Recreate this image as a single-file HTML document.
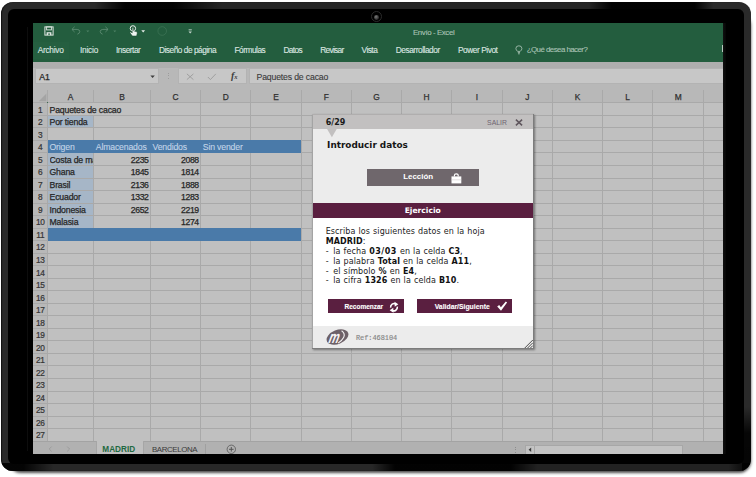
<!DOCTYPE html>
<html lang="es">
<head>
<meta charset="utf-8">
<title>Envío - Excel</title>
<style>
html,body{margin:0;padding:0;background:#fff;}
body{width:756px;height:477px;position:relative;overflow:hidden;font-family:"Liberation Sans",sans-serif;}
.abs{position:absolute;}
#shadow{position:absolute;left:8px;top:12px;width:741px;height:458px;border-radius:12px;box-shadow:1.5px 2.5px 3px rgba(0,0,0,.7);}
#frame{position:absolute;left:1px;top:2px;width:750px;height:469.4px;border-radius:12px;background:#2a2a2a;box-shadow:inset 1px 0 1px #111;overflow:hidden;}
#bezel{position:absolute;left:8px;top:9px;width:735.8px;height:455.2px;border-radius:6px;background:#000;}
#screen{position:absolute;left:33px;top:23px;width:690px;height:431px;background:#c0c0c0;overflow:hidden;}
#ribbon{position:absolute;left:0;top:0;width:690px;height:38.9px;background:#235d3e;}
.tab{position:absolute;white-space:nowrap;line-height:10px;-webkit-text-stroke:0.12px currentColor;}
#band{position:absolute;left:0;top:38.9px;width:690px;height:6.4px;background:#aeaeae;}
#fbar{position:absolute;left:0;top:45.3px;width:690px;height:21.7px;background:#b8b8b8;}
.box{position:absolute;top:0;height:16px;background:#c7c7c7;border:1px solid #b3b3b3;box-sizing:border-box;}
.cell{position:absolute;font-size:8.7px;color:#262626;white-space:nowrap;line-height:12.5px;height:12.5px;letter-spacing:-0.16px;-webkit-text-stroke:0.25px currentColor;margin-top:0.8px;}
.num{text-align:right;letter-spacing:-0.4px;}
.hd{position:absolute;height:12.6px;line-height:12.6px;font-size:8.4px;color:#303030;text-align:center;-webkit-text-stroke:0.25px currentColor;margin-top:0.9px;}
.rn{position:absolute;left:0;width:14.5px;text-align:center;font-size:8.3px;color:#333;line-height:12.5px;height:12.5px;letter-spacing:-0.3px;-webkit-text-stroke:0.2px currentColor;margin-top:0.8px;}
.hl{position:absolute;left:0;width:690px;height:1px;background:#a9a9a9;}
.vl{position:absolute;width:1px;background:#a9a9a9;}
#grid{position:absolute;left:0;top:0;width:690px;height:431px;}
#dlg{position:absolute;left:311.7px;top:114.2px;width:222px;height:235.2px;background:#fff;box-shadow:1px 1px 2px rgba(0,0,0,.4);font-family:"DejaVu Sans","Liberation Sans",sans-serif;}
.dt{position:absolute;white-space:nowrap;}
.b{font-weight:bold;}
.body{position:absolute;white-space:nowrap;font-size:8px;letter-spacing:0.1px;word-spacing:0.35px;line-height:9.96px;color:#222;}
.body b{color:#111;}
#rimtop{position:absolute;left:0;top:0;width:750px;height:8px;background:linear-gradient(90deg,rgba(0,0,0,0) 0,rgba(0,0,0,0) 12.5%,rgba(0,0,0,.92) 16.5%,rgba(0,0,0,.92) 23%,rgba(0,0,0,.12) 29.5%,rgba(0,0,0,.12) 78.4%,rgba(0,0,0,.95) 81.4%,rgba(0,0,0,.95) 92.5%,rgba(0,0,0,0) 95%);}
#rimbot{position:absolute;left:0;top:461px;width:750px;height:9px;background:linear-gradient(90deg,rgba(0,0,0,.9) 0,rgba(0,0,0,.9) 3%,rgba(0,0,0,.05) 7%,rgba(0,0,0,.05) 49.5%,rgba(0,0,0,.95) 52.5%,rgba(0,0,0,.95) 68%,rgba(0,0,0,.2) 71.5%,rgba(0,0,0,.2) 97%,rgba(0,0,0,.85) 99.5%);}
#cam{position:absolute;left:370.6px;top:11.4px;width:11px;height:11px;border-radius:50%;background:#000;border:0.8px solid #2b2b2b;box-sizing:border-box;}
#cam i{position:absolute;left:2.4px;top:2.4px;width:4.8px;height:4.8px;border-radius:50%;background:radial-gradient(circle at 40% 35%,#7a7a7a 0,#3a3a3a 55%,#111 100%);}
#inl{position:absolute;left:27px;top:27px;width:1px;height:424px;background:#0d0d0d;}
#inr{position:absolute;left:723px;top:23px;width:3.4px;height:431px;background:linear-gradient(90deg,#101010,#050505);}
.hy{margin-right:1.6px;}
#rimbr{position:absolute;left:741px;top:405px;width:9px;height:65px;background:linear-gradient(180deg,rgba(0,0,0,0) 0,rgba(0,0,0,.85) 40%,rgba(0,0,0,.9) 100%);}

</style>
</head>
<body>
<div id="shadow"></div>
<div id="frame"><div id="rimtop"></div><div id="rimbot"></div><div id="rimbr"></div></div>
<div id="bezel"></div>
<div id="cam"><i></i></div>
<div id="inl"></div><div id="inr"></div>
<div id="screen">
<div id="grid">
<div class="abs" style="left:0;top:67.00px;width:690px;height:12.85px;background:#b8b8b8"></div>
<div class="abs" style="left:0;top:79.85px;width:14.50px;height:338.75px;background:#b8b8b8"></div>
<div class="abs" style="left:14.50px;top:92.38px;width:46.25px;height:12.53px;background:#a6b6c7"></div>
<div class="abs" style="left:14.50px;top:129.97px;width:46.25px;height:75.18px;background:#a6b6c7"></div>
<div class="hl" style="top:79.35px"></div>
<div class="hl" style="top:91.88px"></div>
<div class="hl" style="top:104.41px"></div>
<div class="hl" style="top:116.94px"></div>
<div class="hl" style="top:129.47px"></div>
<div class="hl" style="top:142.00px"></div>
<div class="hl" style="top:154.53px"></div>
<div class="hl" style="top:167.06px"></div>
<div class="hl" style="top:179.59px"></div>
<div class="hl" style="top:192.12px"></div>
<div class="hl" style="top:204.65px"></div>
<div class="hl" style="top:217.18px"></div>
<div class="hl" style="top:229.71px"></div>
<div class="hl" style="top:242.24px"></div>
<div class="hl" style="top:254.77px"></div>
<div class="hl" style="top:267.30px"></div>
<div class="hl" style="top:279.83px"></div>
<div class="hl" style="top:292.36px"></div>
<div class="hl" style="top:304.89px"></div>
<div class="hl" style="top:317.42px"></div>
<div class="hl" style="top:329.95px"></div>
<div class="hl" style="top:342.48px"></div>
<div class="hl" style="top:355.01px"></div>
<div class="hl" style="top:367.54px"></div>
<div class="hl" style="top:380.07px"></div>
<div class="hl" style="top:392.60px"></div>
<div class="hl" style="top:405.13px"></div>
<div class="hl" style="top:417.66px"></div>
<div class="vl" style="left:14.00px;top:67.00px;height:351.60px"></div>
<div class="vl" style="left:60.25px;top:67.00px;height:351.60px"></div>
<div class="vl" style="left:117.00px;top:67.00px;height:351.60px"></div>
<div class="vl" style="left:167.25px;top:67.00px;height:351.60px"></div>
<div class="vl" style="left:217.25px;top:67.00px;height:351.60px"></div>
<div class="vl" style="left:267.75px;top:67.00px;height:351.60px"></div>
<div class="vl" style="left:318.00px;top:67.00px;height:351.60px"></div>
<div class="vl" style="left:368.00px;top:67.00px;height:351.60px"></div>
<div class="vl" style="left:418.25px;top:67.00px;height:351.60px"></div>
<div class="vl" style="left:468.75px;top:67.00px;height:351.60px"></div>
<div class="vl" style="left:519.00px;top:67.00px;height:351.60px"></div>
<div class="vl" style="left:569.00px;top:67.00px;height:351.60px"></div>
<div class="vl" style="left:619.25px;top:67.00px;height:351.60px"></div>
<div class="vl" style="left:670.25px;top:67.00px;height:351.60px"></div>
<div class="abs" style="left:59.75px;top:80.45px;width:2px;height:11.33px;background:#c0c0c0"></div>
<div class="abs" style="left:14.50px;top:117.44px;width:253.75px;height:12.53px;background:#4a7aa9"></div>
<div class="abs" style="left:14.50px;top:205.15px;width:253.75px;height:12.53px;background:#4a7aa9"></div>
<svg class="abs" style="left:4.6px;top:70px" width="9" height="9" viewBox="0 0 9 9"><path d="M8.4 0.6 V8.2 H0.8 Z" fill="#a4a4a4"/></svg>
<div class="abs" style="left:13.50px;top:78.85px;width:1.6px;height:1.6px;background:#3b6b50"></div>
<div class="hd" style="left:14.50px;width:46.25px;top:67.00px">A</div>
<div class="hd" style="left:60.75px;width:56.75px;top:67.00px">B</div>
<div class="hd" style="left:117.50px;width:50.25px;top:67.00px">C</div>
<div class="hd" style="left:167.75px;width:50.00px;top:67.00px">D</div>
<div class="hd" style="left:217.75px;width:50.50px;top:67.00px">E</div>
<div class="hd" style="left:268.25px;width:50.25px;top:67.00px">F</div>
<div class="hd" style="left:318.50px;width:50.00px;top:67.00px">G</div>
<div class="hd" style="left:368.50px;width:50.25px;top:67.00px">H</div>
<div class="hd" style="left:418.75px;width:50.50px;top:67.00px">I</div>
<div class="hd" style="left:469.25px;width:50.25px;top:67.00px">J</div>
<div class="hd" style="left:519.50px;width:50.00px;top:67.00px">K</div>
<div class="hd" style="left:569.50px;width:50.25px;top:67.00px">L</div>
<div class="hd" style="left:619.75px;width:51.00px;top:67.00px">M</div>
<div class="rn" style="top:79.85px">1</div>
<div class="rn" style="top:92.38px">2</div>
<div class="rn" style="top:104.91px">3</div>
<div class="rn" style="top:117.44px">4</div>
<div class="rn" style="top:129.97px">5</div>
<div class="rn" style="top:142.50px">6</div>
<div class="rn" style="top:155.03px">7</div>
<div class="rn" style="top:167.56px">8</div>
<div class="rn" style="top:180.09px">9</div>
<div class="rn" style="top:192.62px">10</div>
<div class="rn" style="top:205.15px">11</div>
<div class="rn" style="top:217.68px">12</div>
<div class="rn" style="top:230.21px">13</div>
<div class="rn" style="top:242.74px">14</div>
<div class="rn" style="top:255.27px">15</div>
<div class="rn" style="top:267.80px">16</div>
<div class="rn" style="top:280.33px">17</div>
<div class="rn" style="top:292.86px">18</div>
<div class="rn" style="top:305.39px">19</div>
<div class="rn" style="top:317.92px">20</div>
<div class="rn" style="top:330.45px">21</div>
<div class="rn" style="top:342.98px">22</div>
<div class="rn" style="top:355.51px">23</div>
<div class="rn" style="top:368.04px">24</div>
<div class="rn" style="top:380.57px">25</div>
<div class="rn" style="top:393.10px">26</div>
<div class="rn" style="top:405.63px">27</div>
<div class="cell " style="left:16.50px;top:79.85px;">Paquetes de cacao</div>
<div class="cell " style="left:16.50px;top:92.38px;">Por tienda</div>
<div class="cell " style="left:16.50px;top:117.44px;color:#c3d5e8;-webkit-text-stroke:0.1px #c3d5e8">Origen</div>
<div class="cell " style="left:62.75px;top:117.44px;color:#c3d5e8;-webkit-text-stroke:0.1px #c3d5e8">Almacenados</div>
<div class="cell " style="left:119.50px;top:117.44px;color:#c3d5e8;-webkit-text-stroke:0.1px #c3d5e8">Vendidos</div>
<div class="cell " style="left:169.75px;top:117.44px;color:#c3d5e8;-webkit-text-stroke:0.1px #c3d5e8">Sin vender</div>
<div class="cell" style="left:16.50px;top:129.97px;width:43.75px;overflow:hidden">Costa de marfil</div>
<div class="cell num" style="left:60.75px;width:54.75px;top:129.97px;">2235</div>
<div class="cell num" style="left:117.50px;width:48.25px;top:129.97px;">2088</div>
<div class="cell " style="left:16.50px;top:142.50px;">Ghana</div>
<div class="cell num" style="left:60.75px;width:54.75px;top:142.50px;">1845</div>
<div class="cell num" style="left:117.50px;width:48.25px;top:142.50px;">1814</div>
<div class="cell " style="left:16.50px;top:155.03px;">Brasil</div>
<div class="cell num" style="left:60.75px;width:54.75px;top:155.03px;">2136</div>
<div class="cell num" style="left:117.50px;width:48.25px;top:155.03px;">1888</div>
<div class="cell " style="left:16.50px;top:167.56px;">Ecuador</div>
<div class="cell num" style="left:60.75px;width:54.75px;top:167.56px;">1332</div>
<div class="cell num" style="left:117.50px;width:48.25px;top:167.56px;">1283</div>
<div class="cell " style="left:16.50px;top:180.09px;">Indonesia</div>
<div class="cell num" style="left:60.75px;width:54.75px;top:180.09px;">2652</div>
<div class="cell num" style="left:117.50px;width:48.25px;top:180.09px;">2219</div>
<div class="cell " style="left:16.50px;top:192.62px;">Malasia</div>
<div class="cell num" style="left:117.50px;width:48.25px;top:192.62px;">1274</div>
</div>
<div id="ribbon">
<div class="abs" style="left:0;top:19px;width:35.6px;height:17px;background:#255f40"></div>
<div class="tab" style="left:4.70px;top:22.40px;font-size:8.3px;letter-spacing:-0.267px;color:#dce6e0">Archivo</div>
<div class="tab" style="left:47.00px;top:22.40px;font-size:8.3px;letter-spacing:-0.213px;color:#dce6e0">Inicio</div>
<div class="tab" style="left:83.00px;top:22.40px;font-size:8.3px;letter-spacing:-0.468px;color:#dce6e0">Insertar</div>
<div class="tab" style="left:125.90px;top:22.40px;font-size:8.3px;letter-spacing:-0.462px;color:#dce6e0">Diseño de página</div>
<div class="tab" style="left:201.50px;top:22.40px;font-size:8.3px;letter-spacing:-0.479px;color:#dce6e0">Fórmulas</div>
<div class="tab" style="left:250.50px;top:22.40px;font-size:8.3px;letter-spacing:-0.637px;color:#dce6e0">Datos</div>
<div class="tab" style="left:287.25px;top:22.40px;font-size:8.3px;letter-spacing:-0.696px;color:#dce6e0">Revisar</div>
<div class="tab" style="left:328.50px;top:22.40px;font-size:8.3px;letter-spacing:-0.509px;color:#dce6e0">Vista</div>
<div class="tab" style="left:362.75px;top:22.40px;font-size:8.3px;letter-spacing:-0.447px;color:#dce6e0">Desarrollador</div>
<div class="tab" style="left:425.00px;top:22.40px;font-size:8.3px;letter-spacing:-0.435px;color:#dce6e0">Power Pivot</div>
<div class="tab" style="left:493.75px;top:22.40px;font-size:7.9px;letter-spacing:-0.544px;color:#a9c2b4">¿Qué desea hacer?</div>
<div class="tab" style="left:380.00px;top:5.10px;font-size:7.9px;letter-spacing:-0.404px;color:#a9c2b4">Envío - Excel</div>
<svg class="abs" style="left:11px;top:3px" width="10" height="10" viewBox="0 0 10 10"><rect x="0.9" y="0.9" width="8.2" height="8.2" fill="none" stroke="#dfe7e2" stroke-width="1"/><rect x="2.6" y="0.9" width="4.8" height="3" fill="none" stroke="#dfe7e2" stroke-width="0.9"/><rect x="2.6" y="6.2" width="4.8" height="2.9" fill="#dfe7e2"/><rect x="4.4" y="7.3" width="1.3" height="1.8" fill="#235d3e"/></svg>
<svg class="abs" style="left:38px;top:3.4px" width="10" height="9" viewBox="0 0 10 9"><path d="M3.6 0.8 L0.9 3.4 L3.6 6 M1 3.4 H6.2 Q8.8 3.6 8.8 5.6 Q8.6 7.6 6.4 8.2" fill="none" stroke="#5c8b72" stroke-width="0.9"/></svg>
<svg class="abs" style="left:53px;top:7px" width="4" height="3" viewBox="0 0 4 3"><path d="M0.3 0.4 H3.3 L1.8 2.2 Z" fill="#4d8064"/></svg>
<svg class="abs" style="left:65.6px;top:3.4px" width="10" height="9" viewBox="0 0 10 9"><path d="M6.4 0.8 L9.1 3.4 L6.4 6 M9 3.4 H3.8 Q1.2 3.6 1.2 5.6 Q1.4 7.6 3.6 8.2" fill="none" stroke="#5c8b72" stroke-width="0.9"/></svg>
<svg class="abs" style="left:80.4px;top:7px" width="4" height="3" viewBox="0 0 4 3"><path d="M0.3 0.4 H3.3 L1.8 2.2 Z" fill="#4d8064"/></svg>
<svg class="abs" style="left:94.6px;top:2.4px" width="11" height="12" viewBox="0 0 11 12"><circle cx="4.9" cy="3.4" r="2.7" fill="none" stroke="#f0f4f1" stroke-width="1"/><path d="M4.2 2.8 Q4.9 2 5.6 2.8 V5.8 L8.6 6.8 Q9.4 7.2 9.2 8.4 L8.6 11 H4.4 L1.8 7.6 Q2.2 6.6 3.2 7.2 L4.2 8 Z" fill="#f0f4f1" stroke="#1b4a31" stroke-width="0.5"/></svg>
<svg class="abs" style="left:108.4px;top:6.6px" width="5" height="3" viewBox="0 0 5 3"><path d="M0.3 0.3 H4.1 L2.2 2.5 Z" fill="#e6ede9"/></svg>
<svg class="abs" style="left:124px;top:3.4px" width="11" height="11" viewBox="0 0 11 11"><circle cx="5.2" cy="5" r="4.3" fill="none" stroke="#3f7558" stroke-width="0.7"/></svg>
<svg class="abs" style="left:155.4px;top:5.8px" width="5" height="6" viewBox="0 0 5 6"><rect x="0.6" y="0.4" width="3.2" height="0.9" fill="#c6d6cd"/><path d="M0.5 2.4 H3.9 L2.2 4.6 Z" fill="#c6d6cd"/></svg>
<svg class="abs" style="left:482.4px;top:21.6px" width="8" height="10" viewBox="0 0 8 10"><path d="M2.6 6.4 Q0.9 5 0.9 3.4 Q1 0.8 3.9 0.8 Q6.8 0.8 6.9 3.4 Q6.9 5 5.2 6.4 Z M2.8 7.6 H5 M3 8.8 H4.8" fill="none" stroke="#b3c9bd" stroke-width="0.8"/></svg>
<div class="abs" style="left:688.6px;top:22.4px;width:1px;height:7px;background:#b8cabf"></div>
</div>
<div id="band"></div>
<div id="fbar">
<div class="box" style="left:2.3px;width:124px;"></div>
<div class="box" style="left:144.8px;width:69.6px;"></div>
<div class="box" style="left:216px;width:476px;"></div>
<svg class="abs" style="left:116.6px;top:6.4px" width="6" height="4" viewBox="0 0 6 4"><path d="M0.4 0.4 H4.8 L2.6 3 Z" fill="#3f3f3f"/></svg>
<div class="abs" style="left:134.8px;top:5.2px;width:1px;height:6.6px;background:repeating-linear-gradient(#9c9c9c 0,#9c9c9c 1px,transparent 1px,transparent 2.4px)"></div>
<svg class="abs" style="left:152.6px;top:5.2px" width="9" height="8" viewBox="0 0 9 8"><path d="M0.9 0.9 L7.4 6.6 M7.4 0.9 L0.9 6.6" stroke="#9b9b9b" stroke-width="0.9" fill="none"/></svg>
<svg class="abs" style="left:174.4px;top:5.2px" width="10" height="8" viewBox="0 0 10 8"><path d="M0.9 4 L3.4 6.6 L8.8 0.9" stroke="#9b9b9b" stroke-width="0.9" fill="none"/></svg>
<div class="abs" id="t_fx" style="left:198px;top:2px;font-family:'Liberation Serif',serif;font-style:italic;font-weight:bold;font-size:10px;line-height:11px;color:#3c3c3c;letter-spacing:-0.2px">f<span style="font-size:6.5px">x</span></div>
<div class="cell" id="t_a1" style="left:6.3px;top:2.2px;">A1</div>
<div class="cell" id="t_formula" style="left:223.5px;top:2.2px;color:#3a3a3a;-webkit-text-stroke:0.1px #3a3a3a">Paquetes de cacao</div>
</div>
<div class="abs" style="left:0;top:418.2px;width:690px;height:13px;background:#b1b1b1"></div>
<div class="abs" style="left:0;top:417.8px;width:690px;height:1px;background:#a3a3a3"></div>
<div class="abs" style="left:62.7px;top:417.8px;width:48px;height:14px;background:#c0c0c0;border-left:1px solid #a6a6a6;border-right:1px solid #a6a6a6;box-sizing:border-box"></div>
<svg class="abs" style="left:15px;top:423.4px" width="5" height="6" viewBox="0 0 5 6"><path d="M3.6 0.6 L1.2 3 L3.6 5.4" fill="none" stroke="#9a9a9a" stroke-width="0.9"/></svg>
<svg class="abs" style="left:32.6px;top:423.4px" width="5" height="6" viewBox="0 0 5 6"><path d="M1.2 0.6 L3.6 3 L1.2 5.4" fill="none" stroke="#9a9a9a" stroke-width="0.9"/></svg>
<div class="abs" id="t_madrid" style="left:69.3px;top:422px;font-size:8.2px;line-height:10px;font-weight:bold;color:#1f6a42;letter-spacing:0.03px;white-space:nowrap">MADRID</div>
<div class="abs" id="t_barc" style="left:119px;top:422.2px;font-size:7.9px;line-height:10px;color:#3a3a3a;letter-spacing:-0.4px;white-space:nowrap">BARCELONA</div>
<div class="abs" style="left:172.2px;top:421px;width:1px;height:10px;background:#a0a0a0"></div>
<svg class="abs" style="left:193px;top:421px" width="11" height="11" viewBox="0 0 11 11"><circle cx="5.3" cy="5.3" r="4.2" fill="none" stroke="#555" stroke-width="0.8"/><path d="M5.3 3 V7.6 M3 5.3 H7.6" stroke="#555" stroke-width="1"/></svg>
<div class="abs" style="left:481.6px;top:423.6px;width:1px;height:6px;background:repeating-linear-gradient(#8d8d8d 0,#8d8d8d 1px,transparent 1px,transparent 2.3px)"></div>
<div class="abs" style="left:492px;top:421.6px;width:158.4px;height:10px;background:#c3c3c3;border:1px solid #a7a7a7;border-bottom:none;box-sizing:border-box"></div>
<div class="abs" style="left:501.2px;top:422px;width:1px;height:10px;background:#a7a7a7"></div>
<svg class="abs" style="left:494.6px;top:424.2px" width="4" height="6" viewBox="0 0 4 6"><path d="M3.2 0.6 V5 L0.6 2.8 Z" fill="#3a3a3a"/></svg>

</div>
<div id="dlg">
<div class="abs" style="left:0;top:0;width:222px;height:89.2px;background:#ececec"></div>
<div class="abs" style="left:0;top:0;width:222px;height:14.5px;background:#c2c0c0"></div>
<svg class="abs" style="left:14px;top:14px" width="12" height="10" viewBox="0 0 12 10"><path d="M0.8 0.5 L11 0.5 L5.9 9.3 Z" fill="#c2c0c0"/></svg>
<div class="dt b" id="t_step" style="left:14px;top:4px;font-size:8px;line-height:10px;color:#1a1a1a">6/29</div>
<div class="dt" id="t_salir" style="left:175.4px;top:4.9px;font-size:6.85px;line-height:8px;color:#6f6470;font-family:'Liberation Sans',sans-serif">SALIR</div>
<svg class="abs" style="left:203.4px;top:5.2px" width="8" height="7" viewBox="0 0 8 7"><path d="M0.9 0.6 L7.1 6.4 M7.1 0.6 L0.9 6.4" stroke="#5f565d" stroke-width="1.5" fill="none"/></svg>
<div class="dt b" id="t_title" style="left:15.4px;top:24.7px;font-size:8.9px;line-height:12px;color:#151515">Introducir datos</div>
<div class="abs" style="left:55.6px;top:55.1px;width:111.8px;height:16.4px;background:#6f676c"></div>
<div class="dt b" id="t_lec" style="left:91.5px;top:58px;font-size:7.95px;line-height:10px;color:#fff;font-family:'Liberation Sans',sans-serif">Lección</div>
<svg class="abs" style="left:139px;top:58.7px" width="11" height="11" viewBox="0 0 11 11"><path d="M3.4 3.6 V2.4 Q3.4 0.9 5.3 0.9 Q7.2 0.9 7.2 2.4 V3.6" stroke="#fff" stroke-width="1.2" fill="none"/><rect x="0.5" y="3.4" width="9.8" height="7" fill="#fff"/><rect x="0.5" y="6.6" width="9.8" height="0.6" fill="#cfcacd"/></svg>
<div class="abs" style="left:0;top:89.2px;width:222px;height:14.7px;background:#5a1f40"></div>
<div class="dt b" id="t_ej" style="left:0;width:222px;text-align:center;top:92.2px;font-size:7.6px;line-height:10px;color:#fff">Ejercicio</div>
<div class="body" id="t_body" style="left:14px;top:112.5px;">Escriba los siguientes datos en la hoja<br><b>MADRID</b>:<br><span class="hy">-</span> la fecha <b style="letter-spacing:0.5px">03/03</b> en la celda <b>C3</b>,<br><span class="hy">-</span> la palabra <b>Total</b> en la celda <b>A11</b>,<br><span class="hy">-</span> el símbolo <b>%</b> en <b>E4</b>,<br><span class="hy">-</span> la cifra <b>1326</b> en la celda <b>B10</b>.</div>
<div class="abs" style="left:16.5px;top:185px;width:76px;height:14px;background:#5a1f40"></div>
<div class="abs" style="left:105px;top:185px;width:95.3px;height:14px;background:#5a1f40"></div>
<div class="dt b" id="t_rec" style="left:32.8px;top:187.4px;font-size:6.5px;line-height:9px;color:#fff;-webkit-text-stroke:0.12px #fff;font-family:'Liberation Sans',sans-serif">Recomenzar</div>
<div class="dt b" id="t_val" style="left:123px;top:187.4px;font-size:6.84px;line-height:9px;color:#fff;-webkit-text-stroke:0.12px #fff;font-family:'Liberation Sans',sans-serif">Validar/Siguiente</div>
<svg class="abs" style="left:76.2px;top:186.4px" width="12" height="12.4" viewBox="0 0 10 10" preserveAspectRatio="none"><path d="M2.2 5.4 A3 3 0 0 1 6.6 2.4" stroke="#fff" stroke-width="1.3" fill="none"/><path d="M5.4 0.6 L8.6 2.6 L5.6 4.6 Z" fill="#fff"/><path d="M7.8 4.6 A3 3 0 0 1 3.4 7.6" stroke="#fff" stroke-width="1.3" fill="none"/><path d="M4.6 9.4 L1.4 7.4 L4.4 5.4 Z" fill="#fff"/></svg>
<svg class="abs" style="left:184px;top:186px" width="12" height="12" viewBox="0 0 12 12"><path d="M1.2 6.6 L3.2 4.9 L4.9 7.3 L9.8 1.6 L11.1 2.4 L5 10.8 Z" fill="#fff"/></svg>
<div class="abs" style="left:0;top:211.8px;width:222px;height:23.4px;background:#ececec"></div>
<svg class="abs" style="left:14px;top:214px" width="24" height="19" viewBox="0 0 24 19"><ellipse cx="11.5" cy="9" rx="11.4" ry="6.9" transform="rotate(-22 11.5 9)" fill="#6d6168"/><path d="M15.6 2.7 Q19.6 5.6 17.6 9.6 Q16 12.8 12.2 14.9" fill="none" stroke="#f4f2f3" stroke-width="1.1"/><text transform="translate(1.9 14.9) skewX(-14) scale(1.0 1.5)" font-family="Liberation Sans, sans-serif" font-style="italic" font-weight="bold" font-size="11.5" fill="#f6f4f5">m</text></svg>
<div class="dt" id="t_ref" style="left:44.2px;top:220.2px;font-size:6.9px;line-height:9px;color:#858585;-webkit-text-stroke:0.15px #858585;font-family:'Liberation Mono',monospace">Ref:468104</div>
<svg class="abs" style="left:211.4px;top:224.8px" width="10" height="10" viewBox="0 0 10 10"><path d="M9.8 1 L1 9.8 M9.8 3.8 L3.8 9.8 M9.8 6.6 L6.6 9.8" stroke="#4a4a4a" stroke-width="1" fill="none"/></svg>
<div class="abs" style="left:0;top:0;width:1px;height:235.2px;background:#a4a4a4"></div>
<div class="abs" style="left:0;top:0;width:222px;height:1px;background:#b0aeae"></div>
<div class="abs" style="left:221px;top:0;width:1px;height:235.2px;background:#7c7c7c"></div>
<div class="abs" style="left:0;top:234.2px;width:222px;height:1px;background:#7c7c7c"></div>

</div>
</body>
</html>
